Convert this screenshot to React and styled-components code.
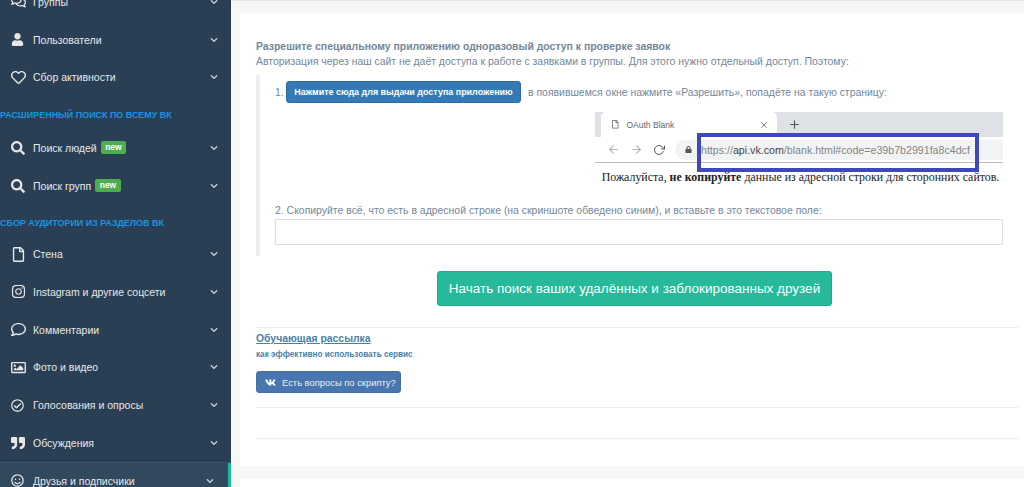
import React from 'react';
import styled, { createGlobalStyle } from 'styled-components';
import {
  FaRegComments, FaUser, FaRegHeart, FaSearch, FaRegFile, FaInstagram, FaRegComment,
  FaRegImage, FaRegCheckCircle, FaQuoteRight, FaRegSmile, FaChevronDown, FaVk, FaLock,
} from 'react-icons/fa';
import { FiArrowLeft, FiArrowRight, FiRotateCw, FiX, FiPlus } from 'react-icons/fi';

const GlobalStyle = createGlobalStyle`
  html, body { margin: 0; padding: 0; height: 487px; overflow: hidden; background: #f7f7f7; }
  body { font-family: "Liberation Sans", Arial, sans-serif; color: #73879c; }
  * { box-sizing: border-box; }
`;

const Page = styled.div`
  display: flex;
  height: 487px;
  overflow: hidden;
`;

const Sidebar = styled.aside`
  flex: 0 0 231px;
  background: #2a3f54;
  margin-top: -17px;
  height: 520px;
`;

const Row = styled.div`
  display: flex;
  align-items: center;
  height: 37.7px;
  padding: 0 13px 0 11px;
  font-size: 10.5px;
  color: #e7e7e7;
  position: relative;
  white-space: nowrap;
  ${(p) => p.$active && `
    background: #32485d;
    border-top: 1px solid #3c5165;
    padding-right: 17px;
    &::after {
      content: "";
      position: absolute;
      right: 0;
      top: 0;
      bottom: 0;
      width: 3px;
      background: #1abb9c;
    }
  `}
`;

const RowIcon = styled.span`
  flex: 0 0 22px;
  display: flex;
  align-items: center;
  font-size: ${(p) => p.$size || 15}px;
  color: #e7e7e7;
`;

const RowLabel = styled.span`
  margin-right: 4px;
`;

const NewBadge = styled.span`
  background: #4cae4f;
  color: #fff;
  font-size: 8.5px;
  font-weight: bold;
  line-height: 12px;
  padding: 0 4.5px 1px;
  border-radius: 2px;
`;

const Chevron = styled(FaChevronDown)`
  margin-left: auto;
  font-size: 8px;
  color: #d0d6dc;
`;

const SideHeading = styled.div`
  height: 24px;
  margin: 7px 0 ${(p) => p.$after || 0}px;
  display: flex;
  align-items: center;
  font-size: 8.95px;
  font-weight: bold;
  color: #1a93e0;
  white-space: nowrap;
`;

const Main = styled.main`
  flex: 1;
  padding: 12px 0 0 9px;
  border-top: 1px solid #e6e6e6;
  min-width: 0;
`;

const Panel = styled.section`
  background: #fff;
  height: 453px;
  padding: 26px 6px 0 16px;
  margin-bottom: 13px;
`;

const Title = styled.div`
  font-size: 10.45px;
  font-weight: bold;
  line-height: 15px;
`;

const Lead = styled.div`
  font-size: 10.45px;
  line-height: 16px;
  margin-bottom: 5px;
`;

const Steps = styled.div`
  border-left: 4px solid #eee;
  padding: 6px 15px 10px 15px;
  height: 181px;
  font-size: 10.45px;
`;

const StepRow = styled.div`
  display: flex;
  align-items: center;
  gap: 7px;
  height: 22px;
  white-space: nowrap;
`;

const StepNumber = styled.span`
  margin-right: -7px;
  width: 11px;
`;

const BlueButton = styled.button`
  width: 235px;
  height: 22px;
  padding: 0;
  background: #337ab7;
  border: 1px solid #2e6da4;
  border-radius: 3px;
  color: #fff;
  font: bold 8.95px "Liberation Sans", Arial, sans-serif;
  white-space: nowrap;
`;

const Shot = styled.div`
  position: relative;
  width: 408px;
  margin: 9px 0 0 320px;
`;

const TabBar = styled.div`
  height: 25px;
  background: #dee1e6;
  display: flex;
  align-items: flex-end;
  padding-left: 6px;
`;

const Tab = styled.div`
  width: 176px;
  height: 25px;
  background: #fff;
  border-radius: 5px 5px 0 0;
  display: flex;
  align-items: center;
  padding: 0 8px 0 10px;
  gap: 7px;
  font-size: 8.5px;
  color: #666;
  svg { flex: none; }
`;

const TabClose = styled(FiX)`
  margin-left: auto;
  font-size: 10px;
`;

const NewTab = styled(FiPlus)`
  font-size: 13px;
  margin: 0 0 6px 11px;
  color: #555;
`;

const AddressBar = styled.div`
  height: 26px;
  display: flex;
  align-items: center;
  gap: 10px;
  padding-left: 12px;
  border-bottom: 1px solid #bbb;
  color: #b5b5b5;
  font-size: 13px;
`;

const ReloadIcon = styled(FiRotateCw)`
  color: #555;
  font-size: 12px;
`;

const UrlBox = styled.div`
  flex: 1;
  height: 20px;
  border-radius: 10px 0 0 10px;
  background: #f1f3f4;
  display: flex;
  align-items: center;
  padding-left: 10px;
  gap: 9px;
  font-size: 10.65px;
  color: #858585;
  white-space: nowrap;
  svg { font-size: 7px; color: #555; }
  b { font-weight: normal; color: #444; }
`;

const Highlight = styled.div`
  position: absolute;
  left: 102px;
  top: 21px;
  width: 282px;
  height: 39px;
  border: 4px solid #3f48b8;
`;

const Caption = styled.div`
  font: 11.9px "Liberation Serif", "Times New Roman", serif;
  color: #222;
  text-align: center;
  padding: 7px 0 0 3px;
  white-space: nowrap;
`;

const StepText = styled.div`
  margin-top: 19px;
  font-size: 10.45px;
  line-height: 14px;
`;

const TextField = styled.input`
  display: block;
  width: 728px;
  height: 26px;
  margin-top: 1px;
  border: 1px solid #ddd;
  background: #fff;
`;

const CenterRow = styled.div`
  display: flex;
  justify-content: center;
  margin-top: 15px;
  padding-right: 5px;
`;

const GreenButton = styled.button`
  width: 395px;
  height: 35px;
  background: #26b99a;
  border: 1px solid #1fa88b;
  border-radius: 3px;
  color: #fff;
  font: 13.5px "Liberation Sans", Arial, sans-serif;
  white-space: nowrap;
`;

const Divider = styled.div`
  height: 1px;
  background: #eee;
  margin-top: ${(p) => p.$top}px;
`;

const LinkTitle = styled.a`
  display: block;
  margin-top: 4px;
  font-size: 10.4px;
  font-weight: bold;
  line-height: 14px;
  color: #4a7fab;
  text-decoration: underline;
`;

const LinkNote = styled.div`
  margin-top: 3px;
  font-size: 8.2px;
  font-weight: bold;
  line-height: 12px;
  color: #4a7fab;
`;

const VkButton = styled.button`
  display: flex;
  align-items: center;
  gap: 6px;
  width: 145px;
  height: 22px;
  margin-top: 10px;
  padding: 0 0 0 8px;
  background: #4a76b0;
  border: 1px solid #4470a8;
  border-radius: 3px;
  color: #e6edf5;
  font: 9.4px "Liberation Sans", Arial, sans-serif;
  white-space: nowrap;
  svg { font-size: 11px; color: #fff; }
`;

const menuTop = [
  { icon: <FaRegComments />, label: 'Группы' },
  { icon: <FaUser />, label: 'Пользователи', size: 13 },
  { icon: <FaRegHeart />, label: 'Сбор активности' },
];
const menuSearch = [
  { icon: <FaSearch />, label: 'Поиск людей', isNew: true, size: 14 },
  { icon: <FaSearch />, label: 'Поиск групп', isNew: true, size: 14 },
];
const menuSources = [
  { icon: <FaRegFile />, label: 'Стена' },
  { icon: <FaInstagram />, label: 'Instagram и другие соцсети' },
  { icon: <FaRegComment />, label: 'Комментарии' },
  { icon: <FaRegImage />, label: 'Фото и видео' },
  { icon: <FaRegCheckCircle />, label: 'Голосования и опросы', size: 13 },
  { icon: <FaQuoteRight />, label: 'Обсуждения', size: 14 },
  { icon: <FaRegSmile />, label: 'Друзья и подписчики', active: true, size: 13 },
];

const MenuRows = ({ items }) =>
  items.map((item) => (
    <Row key={item.label} $active={item.active}>
      <RowIcon $size={item.size}>{item.icon}</RowIcon>
      <RowLabel>{item.label}</RowLabel>
      {item.isNew && <NewBadge>new</NewBadge>}
      <Chevron />
    </Row>
  ));

const App = () => (
  <>
    <GlobalStyle />
    <Page>
      <Sidebar>
        <MenuRows items={menuTop} />
        <SideHeading $after={2}>РАСШИРЕННЫЙ ПОИСК ПО ВСЕМУ ВК</SideHeading>
        <MenuRows items={menuSearch} />
        <SideHeading>СБОР АУДИТОРИИ ИЗ РАЗДЕЛОВ ВК</SideHeading>
        <MenuRows items={menuSources} />
      </Sidebar>
      <Main>
        <Panel>
          <Title>Разрешите специальному приложению одноразовый доступ к проверке заявок</Title>
          <Lead>Авторизация через наш сайт не даёт доступа к работе с заявками в группы. Для этого нужно отдельный доступ. Поэтому:</Lead>
          <Steps>
            <StepRow>
              <StepNumber>1.</StepNumber>
              <BlueButton>Нажмите сюда для выдачи доступа приложению</BlueButton>
              <span>в появившемся окне нажмите «Разрешить», попадёте на такую страницу:</span>
            </StepRow>
            <Shot>
              <TabBar>
                <Tab>
                  <FaRegFile />
                  OAuth Blank
                  <TabClose />
                </Tab>
                <NewTab />
              </TabBar>
              <AddressBar>
                <FiArrowLeft />
                <FiArrowRight />
                <ReloadIcon />
                <UrlBox>
                  <FaLock />
                  <span>https://<b>api.vk.com</b>/blank.html#code=e39b7b2991fa8c4dcf</span>
                </UrlBox>
              </AddressBar>
              <Highlight />
              <Caption>Пожалуйста, <b>не копируйте</b> данные из адресной строки для сторонних сайтов.</Caption>
            </Shot>
            <StepText>2. Скопируйте всё, что есть в адресной строке (на скриншоте обведено синим), и вставьте в это текстовое поле:</StepText>
            <TextField />
          </Steps>
          <CenterRow>
            <GreenButton>Начать поиск ваших удалённых и заблокированных друзей</GreenButton>
          </CenterRow>
          <Divider $top={21} />
          <LinkTitle>Обучающая рассылка</LinkTitle>
          <LinkNote>как эффективно использовать сервис</LinkNote>
          <VkButton><FaVk /> Есть вопросы по скрипту?</VkButton>
          <Divider $top={14} />
          <Divider $top={30} />
        </Panel>
        <Panel />
      </Main>
    </Page>
  </>
);

export default App;
